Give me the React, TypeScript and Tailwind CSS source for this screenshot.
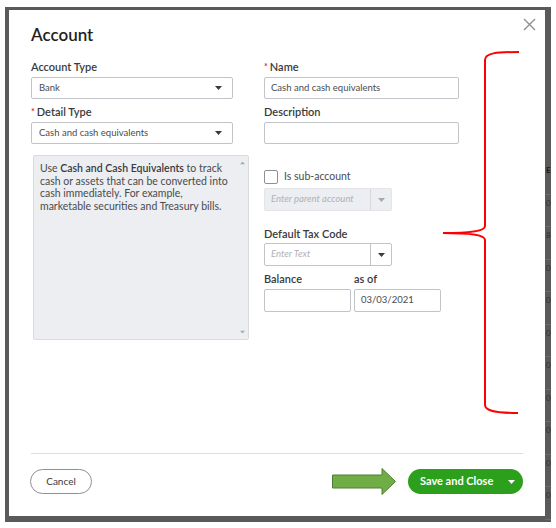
import React from "react";

const font = { fontFamily: "Lato, 'Open Sans', Arial, sans-serif" };

function Caret({ className = "" }: { className?: string }) {
  return (
    <svg width="7" height="4" viewBox="0 0 7 4" className={className}>
      <path d="M0 0 L7 0 L3.5 4 Z" fill="currentColor" />
    </svg>
  );
}

function Label({ children, required }: { children: React.ReactNode; required?: boolean }) {
  return (
    <div className="h-[14px] leading-[14px] text-[11px] font-semibold text-[#393a3d]">
      {required && <span className="text-[#d52b1e] text-[9px] align-top mr-[2px]">*</span>}
      {children}
    </div>
  );
}

function Select({ value }: { value: string }) {
  return (
    <div className="mt-[3px] h-[22px] w-[202px] border border-[#c1c4c8] rounded-[2px] bg-white flex items-center justify-between pl-[7px] pr-[10px]">
      <span className="text-[9.5px] text-[#4a4b4e]">{value}</span>
      <Caret className="text-[#393a3d]" />
    </div>
  );
}

function Combo({ placeholder, disabled }: { placeholder: string; disabled?: boolean }) {
  return (
    <div
      className={`h-[23px] w-[128px] border rounded-[2px] flex ${
        disabled ? "bg-[#eceef1] border-[#e3e5e8]" : "bg-white border-[#c1c4c8]"
      }`}
    >
      <div className="flex-1 flex items-center pl-[6px] text-[9.5px] italic text-[#b0b2b5]">{placeholder}</div>
      <div
        className={`w-[21px] flex items-center justify-center border-l ${
          disabled ? "border-[#d6d8db] text-[#a6a8ab]" : "border-[#c1c4c8] text-[#393a3d]"
        }`}
      >
        <Caret />
      </div>
    </div>
  );
}

// dimmed table cells of the page behind the overlay
const backRows = ["E", "0", "8", "0", "0", "0", "0", "0", "0", "0", "0"];

export default function App() {
  return (
    <div className="w-[556px] h-[528px] bg-white pt-[7px] pl-[5px]" style={font}>
      <div className="w-[546px] h-[515px] bg-[#5a5a5a] flex pt-[3px] pl-[4px]">
        <div className="relative w-[536px] h-[506px] bg-white flex flex-col px-[22px]">
          <button className="absolute top-[8px] right-[9px] w-[13px] h-[13px]">
            <svg viewBox="0 0 13 13" width="13" height="13">
              <path d="M1 1 L12 12 M12 1 L1 12" stroke="#8d9096" strokeWidth="1.4" />
            </svg>
          </button>

          <h1 className="mt-[15px] h-[20px] leading-[20px] text-[17px] font-semibold text-[#1f1f1f]">Account</h1>

          <div className="mt-[15px] flex gap-[15px]">
            <div className="w-[218px] flex flex-col">
              <Label>Account Type</Label>
              <Select value="Bank" />
              <div className="mt-[6px]">
                <Label required>Detail Type</Label>
              </div>
              <Select value="Cash and cash equivalents" />
              <div className="mt-[11px] ml-[2px] w-[216px] h-[185px] bg-[#eceef1] border border-[#d9dbde] rounded-[2px] flex">
                <p className="flex-1 pl-[6px] pr-[4px] pt-[6px] text-[10.5px] leading-[12.5px] text-[#4a4b4e]">
                  Use <b className="font-semibold text-[#393a3d]">Cash and Cash Equivalents</b> to track cash or
                  assets that can be converted into cash immediately. For example, marketable securities and Treasury
                  bills.
                </p>
                <div className="w-[12px] flex flex-col items-center justify-between py-[5px] text-[#a6a8ab]">
                  <Caret className="rotate-180 scale-75" />
                  <Caret className="scale-75" />
                </div>
              </div>
            </div>

            <div className="w-[195px] flex flex-col">
              <Label required>Name</Label>
              <div className="mt-[3px] h-[22px] border border-[#c1c4c8] rounded-[2px] flex items-center pl-[6px] text-[9.5px] text-[#4a4b4e]">
                Cash and cash equivalents
              </div>
              <div className="mt-[6px]">
                <Label>Description</Label>
              </div>
              <div className="mt-[3px] h-[22px] border border-[#c1c4c8] rounded-[2px]" />

              <div className="mt-[26px] h-[14px] flex items-center gap-[6px]">
                <div className="w-[14px] h-[14px] border border-[#8d9096] rounded-[2px]" />
                <span className="text-[10.5px] text-[#4a4b4e]">Is sub-account</span>
              </div>
              <div className="mt-[4px]">
                <Combo placeholder="Enter parent account" disabled />
              </div>

              <div className="mt-[16px]">
                <Label>Default Tax Code</Label>
              </div>
              <div className="mt-[2px]">
                <Combo placeholder="Enter Text" />
              </div>

              <div className="mt-[6px] flex gap-[3px]">
                <div className="w-[87px]">
                  <Label>Balance</Label>
                  <div className="mt-[3px] h-[23px] border border-[#c1c4c8] rounded-[2px]" />
                </div>
                <div className="w-[87px]">
                  <Label>as of</Label>
                  <div className="mt-[3px] h-[23px] border border-[#c1c4c8] rounded-[2px] flex items-center pl-[6px] text-[9.5px] text-[#4a4b4e]">
                    03/03/2021
                  </div>
                </div>
              </div>
            </div>
          </div>

          {/* red bracket drawn over the right side of the form */}
          <svg
            className="absolute left-[431px] top-[38px] pointer-events-none"
            width="84"
            height="370"
            viewBox="440 48 84 370"
          >
            <path
              d="M519 52 C496 52 485 53 485 60 L485 226 C485 231 472 233 443 233 C472 233 485 235 485 240 L485 405 C485 411 496 413 518 413"
              fill="none"
              stroke="#ff0000"
              strokeWidth="2"
            />
          </svg>

          <div className="mt-auto border-t border-[#dcdee1] pt-[14px] pb-[21px] flex items-center justify-between">
            <button className="h-[25px] w-[62px] rounded-full border border-[#8d9096] text-[10px] text-[#393a3d] -ml-[1px]">
              Cancel
            </button>
            <div className="flex items-center gap-[12px]">
              <svg width="64" height="27" viewBox="0 0 64 27">
                <polygon
                  points="0.5,7 50,7 50,0.5 63.5,13.5 50,26.5 50,20 0.5,20"
                  fill="#70ad47"
                  stroke="#507e32"
                  strokeWidth="1"
                />
              </svg>
              <button className="h-[25px] w-[115px] rounded-full bg-[#2ca01c] text-white flex items-center justify-between pl-[12px] pr-[8px]">
                <span className="text-[11px] font-bold">Save and Close</span>
                <Caret />
              </button>
            </div>
          </div>
        </div>

        <div className="w-[6px] overflow-hidden pt-[152px] flex flex-col">
          {backRows.map((c, i) => (
            <div
              key={i}
              className={`h-[32.5px] pl-[1px] border-b border-[#6b6b6b] text-[8px] leading-[16px] ${
                i === 0 ? "font-bold text-[#1a1a1a]" : "text-[#2e2e2e]"
              }`}
            >
              {c}
            </div>
          ))}
        </div>
      </div>
    </div>
  );
}
